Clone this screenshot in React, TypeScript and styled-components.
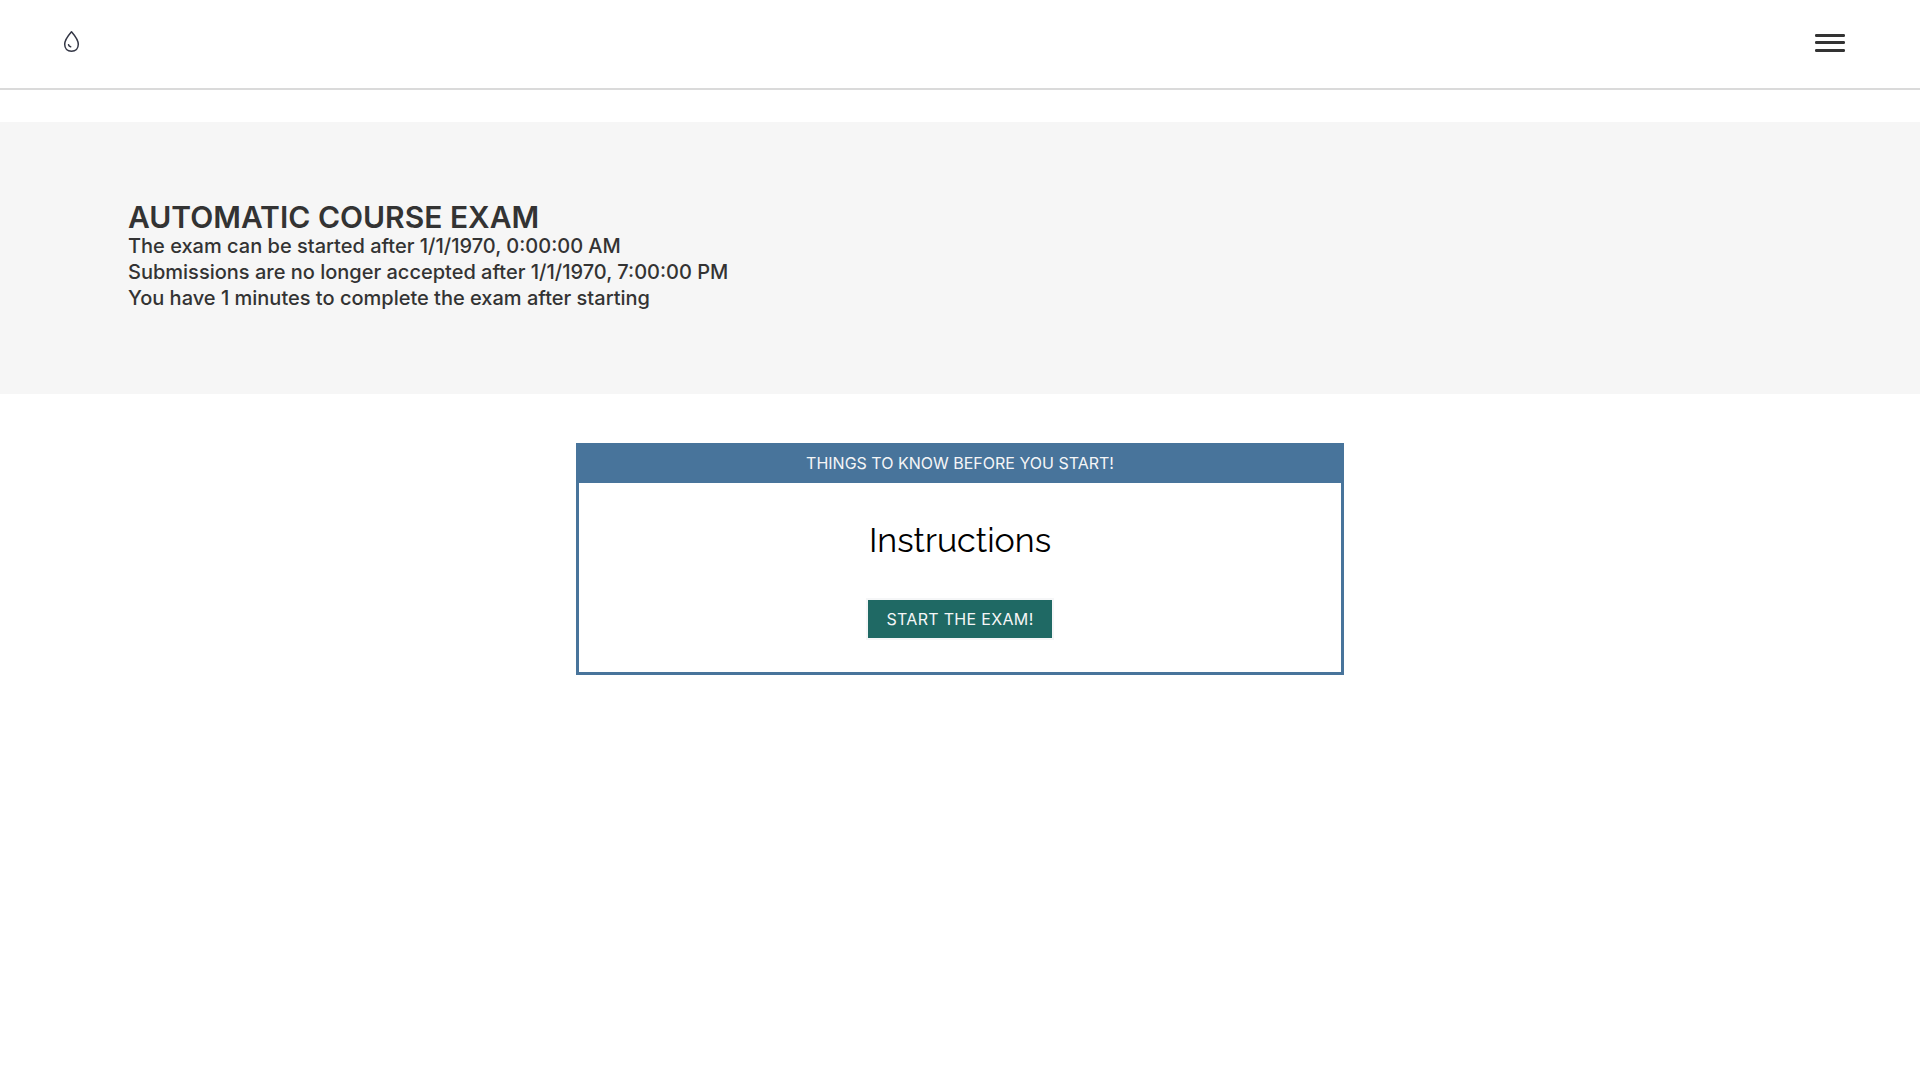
import React from "react";
import styled, { createGlobalStyle } from "styled-components";

const GlobalStyle = createGlobalStyle`
  *, *::before, *::after {
    box-sizing: border-box;
  }
  body {
    margin: 0;
    background: #fff;
    color: #000;
    font-family: Inter, "Liberation Sans", sans-serif;
    font-size: 16px;
    line-height: 26px;
  }
`;

const Header = styled.header`
  border-bottom: 2px solid #dadada;
  margin-bottom: 32px;
`;

const Nav = styled.nav`
  display: flex;
  align-items: center;
  justify-content: space-between;
  height: 88px;
  padding: 0 72px 4px 60px;
`;

const HomeLink = styled.a`
  display: flex;
  color: #333645;
`;

const MenuButton = styled.button`
  display: flex;
  padding: 0;
  border: 0;
  background: none;
  color: #333;
  cursor: pointer;
`;

const Banner = styled.section`
  padding: 79px 128px 83px;
  background: #f6f6f6;
  color: #333;
`;

const Title = styled.h1`
  margin: 0;
  font-size: 30px;
  font-weight: 600;
  line-height: 32px;
  text-transform: uppercase;
`;

const Detail = styled.p`
  margin: 0;
  font-size: 20px;
  font-weight: 500;
  line-height: 26px;
`;

const Card = styled.section`
  width: 40%;
  margin: 49px auto 0;
  border: 3px solid #48749b;
`;

const CardHeader = styled.div`
  padding: 4px 16px 7px;
  background: #48749b;
  color: #f5f6f7;
  text-align: center;
  text-transform: uppercase;
`;

const CardBody = styled.div`
  display: flex;
  flex-direction: column;
  align-items: center;
  gap: 32px;
  padding: 32px;
`;

const Heading = styled.h2`
  margin: 0;
  font-family: Raleway, Lato, "Liberation Sans", sans-serif;
  font-size: 34px;
  font-weight: 400;
  line-height: 51px;
`;

const StartButton = styled.button`
  padding: 6px 18px;
  border: 2px solid #f5f6f7;
  background: #1f6964;
  color: #f5f6f7;
  font-family: inherit;
  font-size: 16px;
  line-height: 26px;
  letter-spacing: 0.02em;
  text-transform: uppercase;
  cursor: pointer;
`;

const DropIcon = () => (
  <svg width="24" height="24" viewBox="0 0 24 24" fill="none" stroke="currentColor" aria-hidden="true">
    <path d="M11.5 1.8C8.8 4.9 4.7 10.2 4.7 14.3c0 4.2 2.7 7 6.8 7s6.8-2.8 6.8-7C18.3 10.2 14.2 4.9 11.5 1.8Z" strokeWidth="1.5" strokeLinejoin="round" />
    <path d="M8.6 14.9c.2 1 .9 1.6 2 1.9" strokeWidth="1.6" strokeLinecap="round" />
  </svg>
);

const MenuIcon = () => (
  <svg width="36" height="24" viewBox="0 0 36 24" fill="currentColor" aria-hidden="true">
    <rect x="3" y="4" width="30" height="3" rx="1.2" />
    <rect x="3" y="11" width="30" height="3" rx="1.2" />
    <rect x="3" y="19" width="30" height="3" rx="1.2" />
  </svg>
);

const details = [
  "The exam can be started after 1/1/1970, 0:00:00 AM",
  "Submissions are no longer accepted after 1/1/1970, 7:00:00 PM",
  "You have 1 minutes to complete the exam after starting",
];

export default function App() {
  return (
    <>
      <GlobalStyle />
      <Header>
        <Nav>
          <HomeLink href="/" aria-label="Home">
            <DropIcon />
          </HomeLink>
          <MenuButton type="button" aria-label="Open menu">
            <MenuIcon />
          </MenuButton>
        </Nav>
      </Header>
      <main>
        <Banner>
          <Title>Automatic Course Exam</Title>
          {details.map((text) => (
            <Detail key={text}>{text}</Detail>
          ))}
        </Banner>
        <Card>
          <CardHeader>Things to know before you start!</CardHeader>
          <CardBody>
            <Heading>Instructions</Heading>
            <StartButton type="button">Start the exam!</StartButton>
          </CardBody>
        </Card>
      </main>
    </>
  );
}
